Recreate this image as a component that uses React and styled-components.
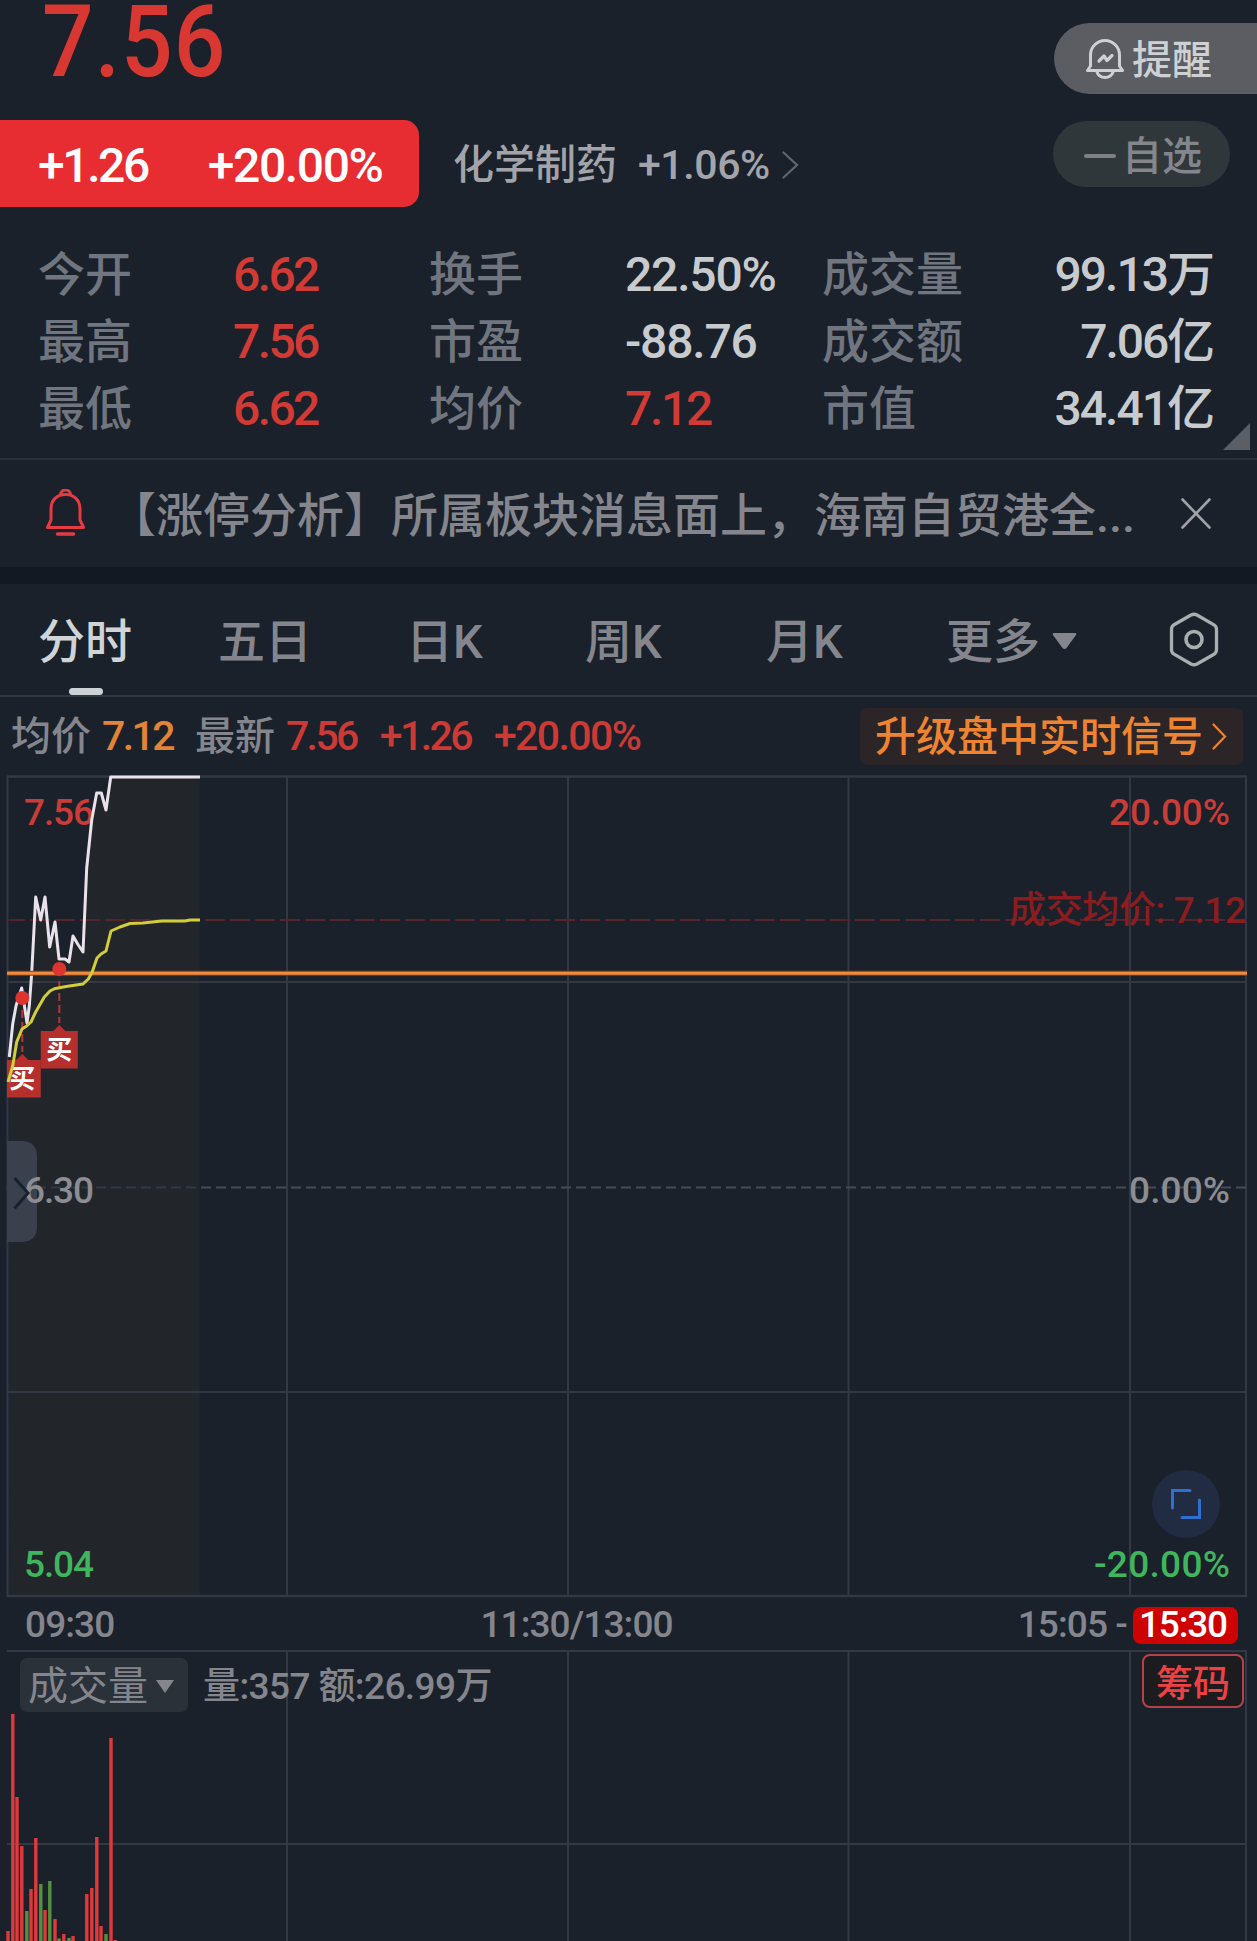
import styled, { createGlobalStyle } from 'styled-components';

const GlobalStyle = createGlobalStyle`
  * {
    box-sizing: border-box;
    margin: 0;
    padding: 0;
  }

  body {
    background-color: #1a212a;
    font-family: Roboto, 'Noto Sans CJK SC', sans-serif;
    font-weight: 500;
    line-height: 1.2;
    color: #85868d;
    overflow: hidden;
  }

  svg {
    display: block;
    flex: none;
  }
`;

const Page = styled.div`
  width: 1257px;
  height: 1941px;
  overflow: hidden;
  display: flex;
  flex-direction: column;
`;

const Header = styled.header`
  display: flex;
  justify-content: space-between;
  height: 207px;
`;

const Price = styled.h1`
  height: 120px;
  padding-left: 42px;
  font-size: 101px;
  font-weight: 500;
  line-height: 83px;
  letter-spacing: 1.2px;
  color: #d93832;
  transform: scaleX(0.9);
  transform-origin: 42px 0;
`;

const QuoteRow = styled.div`
  display: flex;
  align-items: center;
  height: 87px;
`;

const ChangeChip = styled.div`
  display: flex;
  align-items: center;
  gap: 60px;
  width: 419px;
  height: 87px;
  padding: 5px 0 0 38px;
  border-radius: 0 15px 15px 0;
  background-color: #e72d31;
  color: #fff;
  font-size: 48px;
  font-weight: 500;
  letter-spacing: -1.4px;
  white-space: nowrap;

  span:first-child {
    letter-spacing: -2.4px;
  }
`;

const Sector = styled.div`
  display: flex;
  align-items: center;
  padding: 2px 0 0 34px;
  font-size: 41px;
  line-height: 48px;
  color: #a3a4a9;

  b {
    margin-left: 21px;
    font-weight: 500;
    letter-spacing: -0.4px;
  }

  svg {
    margin-left: 12px;
  }
`;

const Actions = styled.div`
  display: flex;
  flex-direction: column;
  align-items: flex-end;
  padding-top: 23px;
`;

const RemindButton = styled.div`
  display: flex;
  align-items: center;
  width: 203px;
  height: 71px;
  padding-left: 32px;
  border-radius: 36px 0 0 36px;
  background-color: #5b5d62;
  color: #ced1d4;
  font-size: 40px;

  span {
    padding: 4px 0 0 8px;
  }
`;

const WatchButton = styled.div`
  display: flex;
  align-items: center;
  width: 177px;
  height: 66px;
  margin: 27px 27px 0 0;
  padding-left: 31px;
  border-radius: 33px;
  background-color: #30373a;
  color: #85868d;
  font-size: 40px;

  i {
    width: 32px;
    height: 4px;
    margin-top: 3px;
    border-radius: 2px;
    background-color: #7e8086;
  }

  span {
    padding: 6px 0 0 6px;
  }
`;

const Stats = styled.section`
  position: relative;
  display: grid;
  grid-template-columns: 195px 196px 196px 197px 194px;
  grid-template-columns: 195px 196px 196px 197px 197px 194px;
  grid-auto-rows: 67px;
  height: 253px;
  padding: 34px 0 0 38px;
  border-bottom: 2px solid #2b3139;
  font-size: 47px;
  line-height: 67px;
  white-space: nowrap;
`;

const StatLabel = styled.div`
  color: #70757f;
`;

const StatValue = styled.div`
  font-size: 48px;
  letter-spacing: ${(props) => props.$tracking}px;
  color: ${(props) => (props.$up ? '#d13a35' : '#c8cbce')};
  text-align: ${(props) => (props.$right ? 'right' : 'left')};
`;

const Corner = styled.svg`
  position: absolute;
  right: 7px;
  bottom: 8px;
`;

const Notice = styled.section`
  display: flex;
  align-items: center;
  height: 107px;
  padding: 0 46px;
  font-size: 47px;

  p {
    flex: 1;
    padding: 7px 0 0 24px;
    white-space: nowrap;
  }
`;

const Band = styled.div`
  height: 17px;
  background-color: #121922;
`;

const Tabs = styled.nav`
  display: grid;
  grid-template-columns: 180px 188px 179px 181px 180px 223px auto;
  align-items: center;
  height: 113px;
  padding-left: 38px;
  border-bottom: 2px solid #2f3640;
`;

const Tab = styled.div`
  position: relative;
  display: flex;
  align-items: center;
  height: 111px;
  padding-top: 7px;
  font-size: 47px;
  color: ${(props) => (props.$active ? '#d0d4d6' : '#85868d')};

  &::after {
    content: '';
    display: ${(props) => (props.$active ? 'block' : 'none')};
    position: absolute;
    left: 31px;
    bottom: 0;
    width: 34px;
    height: 7px;
    border-radius: 4px;
    background-color: #cdd2d4;
  }

  svg {
    margin: -3px 0 0 12px;
  }
`;

const InfoRow = styled.div`
  display: flex;
  align-items: center;
  height: 79px;
  padding: 1px 14px 0 11px;
  font-size: 40px;
  white-space: nowrap;
`;

const InfoValue = styled.span`
  margin-left: ${(props) => props.$gap}px;
  margin-right: ${(props) => props.$after || 0}px;
  font-size: 41px;
  letter-spacing: ${(props) => props.$tracking || -2.6}px;
  color: ${(props) => props.$color};
`;

const UpgradeButton = styled.div`
  display: flex;
  align-items: center;
  justify-content: space-between;
  width: 383px;
  height: 57px;
  margin: -1px 0 0 auto;
  padding: 0 16px 0 15px;
  border-radius: 7px;
  background-color: #2b2528;
  color: #ee8432;
  font-size: 41px;

  span {
    padding-top: 4px;
  }
`;

const ChartSvg = styled.svg`
  text {
    font-size: 37px;
    font-weight: 500;
    fill: #8c8d93;
  }

  .up {
    fill: #c93c38;
  }

  .down {
    fill: #3fb55d;
  }

  .cost {
    fill: #8b1c20;
  }

  .buy {
    fill: #fff;
    font-size: 26px;
    font-weight: 700;
  }
`;

const TimeRow = styled.div`
  display: flex;
  align-items: center;
  height: 52px;
  padding: 2px 19px 0 25px;
  font-size: 37px;
  letter-spacing: -0.9px;
  white-space: nowrap;
`;

const TimeMid = styled.span`
  margin-left: 366px;
`;

const TimeEnd = styled.span`
  margin-left: auto;
  margin-right: 6px;
`;

const TimeBadge = styled.span`
  width: 105px;
  height: 37px;
  border-radius: 8px;
  background-color: #cf0202;
  color: #fff;
  line-height: 36px;
  letter-spacing: -1.2px;
  padding-left: 6px;
`;

const Volume = styled.section`
  position: relative;
  height: 291px;
`;

const VolumeSvg = styled.svg`
  position: absolute;
  left: 0;
  top: 0;
`;

const VolumeHead = styled.div`
  position: relative;
  display: flex;
  align-items: center;
  padding: 3px 13px 0 20px;
  font-size: 37px;
  white-space: nowrap;
`;

const VolumeSelect = styled.div`
  display: flex;
  align-items: center;
  justify-content: space-between;
  width: 168px;
  height: 54px;
  margin: 5px 15px 0 0;
  padding: 3px 14px 0 8px;
  border-radius: 7px;
  background-color: #2b3139;
  font-size: 40px;
  font-weight: 400;
`;

const VolumeText = styled.span`
  padding-top: 9px;
  letter-spacing: -0.6px;
`;

const ChipButton = styled.div`
  width: 102px;
  height: 54px;
  margin: 0 0 3px auto;
  border: 2px solid #b3434a;
  border-radius: 8px;
  background-color: #1c1b1d;
  color: #ee4145;
  font-size: 37px;
  line-height: 57px;
  text-align: center;
`;

const stats = [
  ['今开', '6.62', true, -2.6],
  ['换手', '22.50%', false, -1.2],
  ['成交量', '99.13万', false, -2],
  ['最高', '7.56', true, -2.6],
  ['市盈', '-88.76', false, -1.2],
  ['成交额', '7.06亿', false, -2.1],
  ['最低', '6.62', true, -2.6],
  ['均价', '7.12', true, -2.3],
  ['市值', '34.41亿', false, -2],
];

const tabs = ['分时', '五日', '日K', '周K', '月K'];

const gridX = [287, 568, 848.5, 1130];

// chart points are in page pixels, the svg viewBox starts at y = 775
const priceLine =
  '9.3,1057 12.7,1024 16,1006 21.7,988 27,1023 29.3,1006 31.7,973 35.7,897 40.7,920 45,897 49.7,947 55,922 59,959 65,959 69,962 73,936 78.3,945 83,952 86.7,868 91.7,820 96.7,793 101.3,793 106,810 110.7,777';

const avgLine =
  '8,1082 12.7,1066 16.7,1042 22,1029 26.7,1026 31,1022 35.7,1012 44.3,997 50,991 54.3,988.7 66,986.5 83,984 88.3,979 92.3,971.7 97,958 101,954 106,951 111,931 120,927 130,923.5 143,923 161.7,921 185,921 190,920 200,920';

const bars = [
  [8, 1931, 1],
  [12.8, 1714, 1],
  [17, 1797, 1],
  [21.8, 1846, 1],
  [26.8, 1911, 0],
  [31, 1889, 1],
  [35.8, 1838, 1],
  [40.8, 1884, 0],
  [45, 1910, 1],
  [49.8, 1881, 0],
  [55, 1919, 1],
  [59, 1938.5, 0],
  [63.8, 1934, 1],
  [69, 1938, 0],
  [73, 1936, 1],
  [86.8, 1894, 1],
  [91.8, 1888, 1],
  [96.8, 1837, 1],
  [101, 1926, 1],
  [106, 1934, 0],
  [111, 1738, 1],
  [115, 1940, 1],
];

const Chevron = ({ width, height, color, stroke }) => (
  <svg width={width} height={height} fill="none" stroke={color} strokeWidth={stroke}>
    <path d={`M1.5 1.5L${width - 2} ${height / 2}L1.5 ${height - 1.5}`} strokeLinecap="round" />
  </svg>
);

const RemindIcon = () => (
  <svg width="38" height="40" viewBox="0 0 38 40" fill="none" stroke="#ced1d4" strokeLinejoin="round" strokeLinecap="round">
    <path d="M4.5 27V16a14.5 14.5 0 0 1 29 0v11l3 4.5h-35z" strokeWidth="3" />
    <path d="M11 33c1 3 4 5.500 8 5.500s7-2.500 8-5.500" strokeWidth="3" />
    <path d="M13 22l5-5 3 4.500 5-5" strokeWidth="3.200" />
  </svg>
);

const BellIcon = () => (
  <svg width="39" height="48" viewBox="0 0 39 48" fill="none" stroke="#e63b43" strokeWidth="3" strokeLinejoin="round" strokeLinecap="round">
    <path d="M14.500 5.500a5 4.500 0 0 1 10 0" />
    <path d="M5 31V20C5 11 11 5.500 19.500 5.500S34 11 34 20v11l3.500 7.500h-36z" />
    <path d="M11.500 45h16" strokeWidth="3.500" />
  </svg>
);

const HexIcon = () => (
  <svg width="50" height="55" viewBox="0 0 50 55" fill="none" stroke="#a9aeb1" strokeWidth="3.300" strokeLinejoin="round">
    <path d="M22 3L5 12.800Q2.500 14.300 2.500 17.500V37.500Q2.500 40.700 5 42.200L22 52Q25 53.500 28 52L45 42.200Q47.500 40.700 47.500 37.500V17.500Q47.500 14.300 45 12.800L28 3Q25 1.500 22 3Z" />
    <circle cx="25" cy="27.500" r="8" strokeWidth="3.600" />
  </svg>
);

const BuyMark = ({ x, y }) => (
  <g>
    <path d={`M${x} ${y + 12}V${y + 54}`} stroke="#b8343a" strokeWidth="2" strokeDasharray="8 4" />
    <path
      d={`M${x - 18.500} ${y + 62}h12.500l6 -6l6 6h12.500v37.500h-37z`}
      fill="#b52f2d"
    />
    <circle cx={x} cy={y} r="7" fill="#dd342f" />
    <text className="buy" x={x - 13} y={y + 90}>
      买
    </text>
  </g>
);

const MinuteChart = () => (
  <ChartSvg width="1257" height="823" viewBox="0 775 1257 823">
    <defs>
      <clipPath id="plot">
        <rect x="7" y="775" width="1241" height="824" />
      </clipPath>
    </defs>

    <polygon points={`${priceLine} 199.500,777 199.500,1596 8,1596`} fill="#22262a" />

    <g stroke="#333844" strokeWidth="2" fill="none">
      <path d="M7 776.500H1247M7 1596H1247" strokeWidth="2.600" />
      <path d="M7.500 776V1597M1246 776V1597M7 982H1247M7 1392H1247" />
      {gridX.map((x) => (
        <path key={x} d={`M${x} 776V1597`} />
      ))}
    </g>
    <path d="M201 1187.500H1247" stroke="#464b57" strokeWidth="2" strokeDasharray="10 5" />
    <path d="M6 1187.500H200" stroke="#303848" strokeWidth="2" strokeDasharray="10 5" />
    <path d="M5 920H1247" stroke="#56242a" strokeWidth="2" strokeDasharray="20 5" clipPath="url(#plot)" />

    <text className="up" x="24" y="825" textLength="70">7.56</text>
    <text className="up" x="1109" y="825" textLength="121">20.00%</text>
    <text className="cost" x="1009" y="923" textLength="237">成交均价: 7.12</text>

    <polyline points={`${priceLine} 200,777`} fill="none" stroke="#e9e2ea" strokeWidth="3" strokeLinejoin="round" />
    <path d="M7 973.300H1247" stroke="#7d4518" strokeWidth="5" />
    <path d="M7 973.300H1247" stroke="#ef8a3e" strokeWidth="3" />

    <g clipPath="url(#plot)">
      <BuyMark x={22.3} y={998} />
      <BuyMark x={59.3} y={969} />
    </g>
    <polyline points={avgLine} fill="none" stroke="#d2cd38" strokeWidth="3" strokeLinejoin="round" />

    <path d="M7 1141H21Q37 1141 37 1157V1226Q37 1242 21 1242H7Z" fill="#3b414c" />
    <text x="24" y="1203" textLength="70">6.30</text>
    <text x="1129" y="1203" textLength="101">0.00%</text>
    <path d="M14.500 1178L28 1193L14.500 1208.500" fill="none" stroke="#182130" strokeWidth="3" />

    <circle cx="1186" cy="1504" r="34" fill="#212c43" />
    <path d="M1172.500 1508V1490.500H1190M1199.500 1500V1517.500H1182" fill="none" stroke="#2f6fd0" strokeWidth="3" strokeLinecap="round" />
    <text className="down" x="24" y="1577" textLength="70">5.04</text>
    <text className="down" x="1094" y="1577" textLength="136">-20.00%</text>
  </ChartSvg>
);

const App = () => {
  return (
    <>
      <GlobalStyle />
      <Page>
        <Header>
          <div>
            <Price>7.56</Price>
            <QuoteRow>
              <ChangeChip>
                <span>+1.26</span>
                <span>+20.00%</span>
              </ChangeChip>
              <Sector>
                化学制药<b>+1.06%</b>
                <Chevron width={17} height={28} color="#62656c" stroke={2.2} />
              </Sector>
            </QuoteRow>
          </div>
          <Actions>
            <RemindButton>
              <RemindIcon />
              <span>提醒</span>
            </RemindButton>
            <WatchButton>
              <i />
              <span>自选</span>
            </WatchButton>
          </Actions>
        </Header>

        <Stats>
          {stats.map(([label, value, up, tracking], i) => [
            <StatLabel key={label}>{label}</StatLabel>,
            <StatValue key={label + value} $up={up} $tracking={tracking} $right={i % 3 === 2}>
              {value}
            </StatValue>,
          ])}
          <Corner width="27" height="27">
            <path d="M27 0V27H0Z" fill="#5b5e64" />
          </Corner>
        </Stats>

        <Notice>
          <BellIcon />
          <p>【涨停分析】所属板块消息面上，海南自贸港全...</p>
          <svg width="30" height="31" fill="none" stroke="#a0a2a6" strokeWidth="2.600" strokeLinecap="round">
            <path d="M1.500 1.500L28.500 29.500M28.500 1.500L1.500 29.500" />
          </svg>
        </Notice>
        <Band />

        <Tabs>
          {tabs.map((tab, i) => (
            <Tab key={tab} $active={i === 0}>
              {tab}
            </Tab>
          ))}
          <Tab>
            更多
            <svg width="25" height="16">
              <path d="M2 0H23Q25 0 24 2L14.500 15Q12.500 17 10.500 15L1 2Q0 0 2 0Z" fill="#85868d" />
            </svg>
          </Tab>
          <HexIcon />
        </Tabs>

        <InfoRow>
          均价
          <InfoValue $gap={11} $after={22} $color="#e28338">7.12</InfoValue>
          最新
          <InfoValue $gap={11} $color="#cd3a36">7.56</InfoValue>
          <InfoValue $gap={23} $color="#cd3a36">+1.26</InfoValue>
          <InfoValue $gap={23} $tracking={-1.6} $color="#cd3a36">+20.00%</InfoValue>
          <UpgradeButton>
            <span>升级盘中实时信号</span>
            <Chevron width={15} height={27} color="#ee8432" stroke={2.2} />
          </UpgradeButton>
        </InfoRow>

        <MinuteChart />

        <TimeRow>
          <span>09:30</span>
          <TimeMid>11:30/13:00</TimeMid>
          <TimeEnd>15:05 -</TimeEnd>
          <TimeBadge>15:30</TimeBadge>
        </TimeRow>

        <Volume>
          <VolumeSvg width="1257" height="291" viewBox="0 1650 1257 291">
            <g stroke="#333844" strokeWidth="2">
              <path d="M7 1651H1247M7 1844H1247M1246 1651V1941" />
              {gridX.map((x) => (
                <path key={x} d={`M${x} 1651V1941`} />
              ))}
            </g>
            {bars.map(([x, top, up]) => (
              <rect key={x} x={x - 1.7} y={top} width="3.400" height={1941 - top} fill={up ? '#e0393c' : '#55903f'} />
            ))}
          </VolumeSvg>
          <VolumeHead>
            <VolumeSelect>
              成交量
              <svg width="18" height="13">
                <path d="M0 0H18L9 13Z" fill="#85868d" />
              </svg>
            </VolumeSelect>
            <VolumeText>量:357 额:26.99万</VolumeText>
            <ChipButton>筹码</ChipButton>
          </VolumeHead>
        </Volume>
      </Page>
    </>
  );
};

export default App;
